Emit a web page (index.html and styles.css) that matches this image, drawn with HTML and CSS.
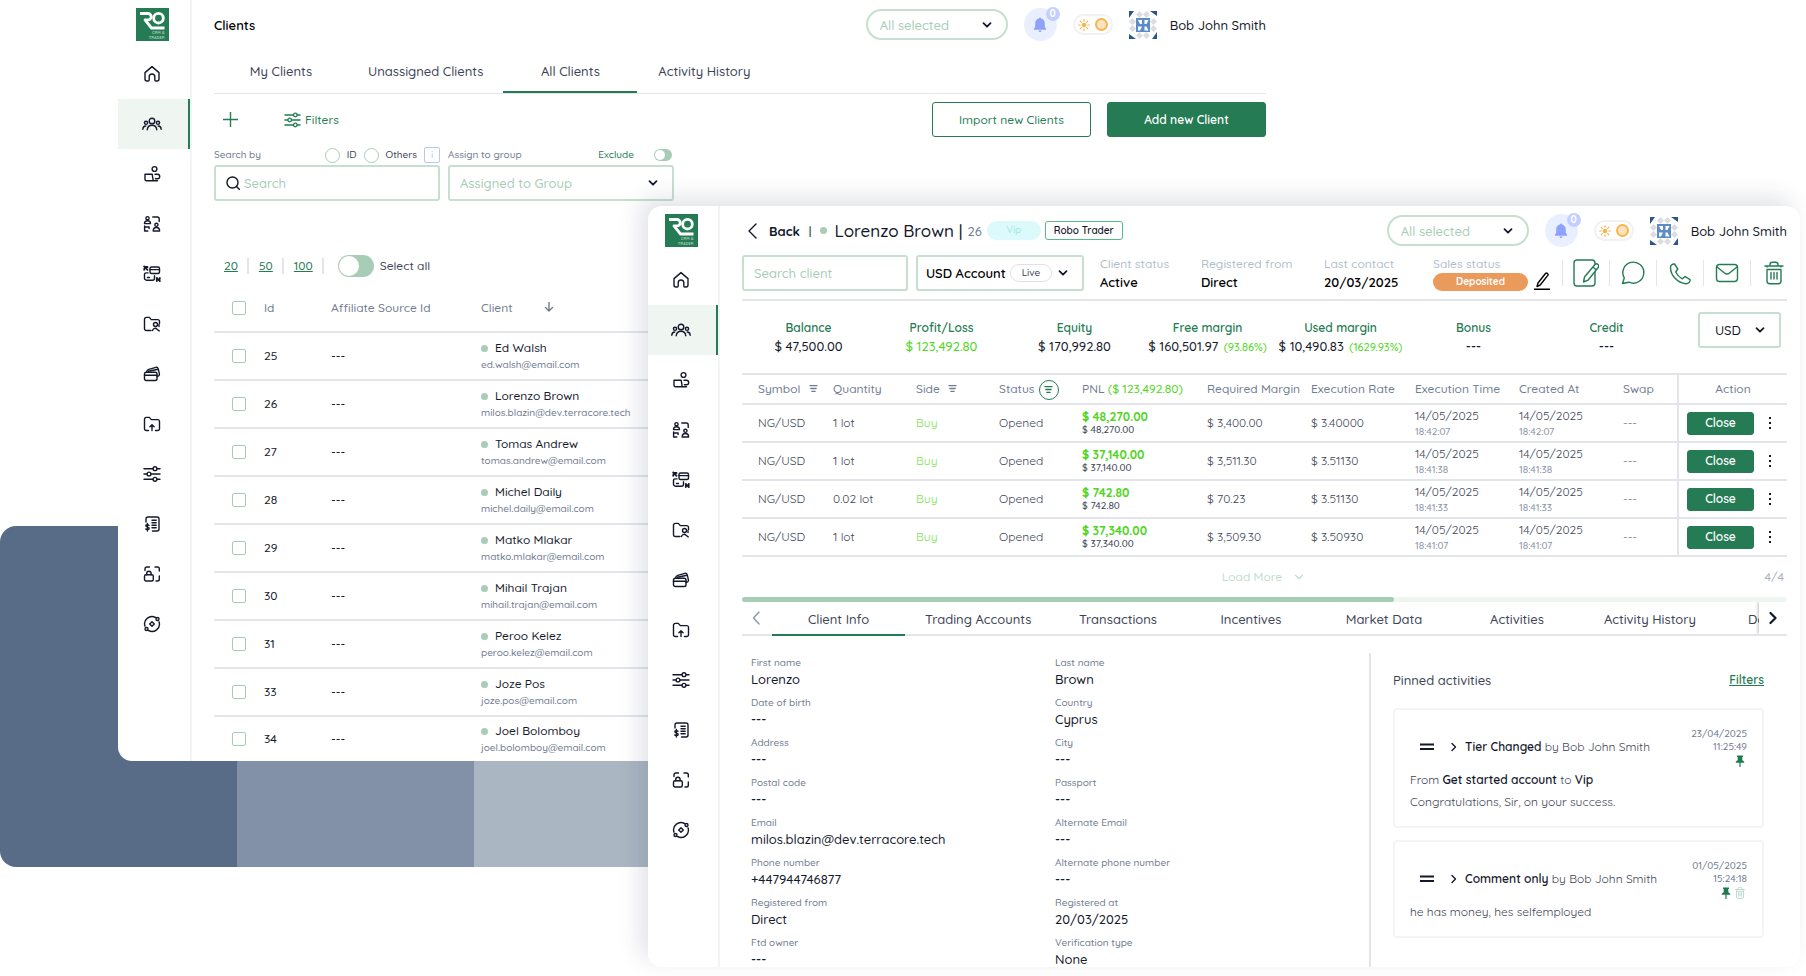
FILE: index.html
```html
<!DOCTYPE html>
<html lang="en">
<head>
    <meta charset="UTF-8">
    <meta name="viewport" content="width=device-width, initial-scale=1.0">
    <title>CRM &amp; Trader</title>
    <link rel="stylesheet" href="styles.css">
</head>
<body>
    <!-- Shared icons -->
    <svg class="sprite" aria-hidden="true">
        <symbol id="logo" viewBox="0 0 33 33">
            <rect width="33" height="33" fill="#257b54" stroke="none"/>
            <g fill="none" stroke="#fff" stroke-width="2.800" stroke-linecap="butt">
                <path d="M4 5.500h8a3.200 3.200 0 0 1 0 6.400H9L15.500 20H28.500"/>
                <circle cx="22.500" cy="10.200" r="4.800"/>
            </g>
            <text x="28.500" y="26" class="logo-text">CRM &amp;</text>
            <text x="28.500" y="30.500" class="logo-text">TRADER</text>
        </symbol>
        <symbol id="home" viewBox="0 0 18 18">
            <path d="M2 7.600 9 1.600l7 6V14a2 2 0 0 1-2 2h-1.200a1 1 0 0 1-1-1v-3.200a2.800 2.800 0 0 0-5.600 0V15a1 1 0 0 1-1 1H4a2 2 0 0 1-2-2z"/>
        </symbol>
        <symbol id="people" viewBox="0 0 20 18">
            <circle cx="10" cy="6" r="2.800"/><circle cx="4" cy="7.800" r="1.600"/><circle cx="16" cy="7.800" r="1.600"/>
            <path d="M5.200 14.800c.3-3 2.200-4.600 4.800-4.600s4.500 1.600 4.800 4.600M.8 14.200c.1-2 1.200-3.200 3-3.200M19.200 14.200c-.1-2-1.200-3.200-3-3.200"/>
        </symbol>
        <symbol id="desk" viewBox="0 0 18 18">
            <circle cx="11.500" cy="4" r="2.400"/>
            <path d="M2 9.200h7.200l1 6.600H3.600a1.600 1.600 0 0 1-1.600-1.600zM12 9.200h2.400a2.300 2.300 0 0 1 0 4.600h-2M8 15.800h6.500"/>
        </symbol>
        <symbol id="team" viewBox="0 0 18 18">
            <circle cx="4.500" cy="3.200" r="1.600"/><path d="M1.500 8.600c0-3.800 6-3.800 6 0zM9.800 2h4.600A1.800 1.800 0 0 1 16.200 3.800V6.500M1.600 11v5h3.200M1.600 12h4.500v1.500"/>
            <circle cx="13.400" cy="9.800" r="1.600"/><path d="M10.200 16c0-4.600 6.400-4.600 6.400 0z"/>
        </symbol>
        <symbol id="transfer" viewBox="0 0 18 18">
            <rect x="7" y="2" width="9.500" height="6.500" rx="1.500"/><path d="M7 4.600h9.500M11.500 10.800v2.400a2 2 0 0 1-2 2h-6a2 2 0 0 1-2-2V9.500a1.600 1.600 0 0 1 1.600-1.600H5M4.500 12.500h2"/>
            <path d="M1.200 1.500 4.500 4.800M1.200 4.800V4M4.500 2h-2M16.800 16l-3-3M13.800 16v-1.500M16.800 13v1" stroke-width="1.800"/>
        </symbol>
        <symbol id="folder-user" viewBox="0 0 18 18">
            <path d="M8 15.500H3.300A1.800 1.800 0 0 1 1.500 13.700V4.200a1.800 1.800 0 0 1 1.800-1.800h3l2 2.200h6.400a1.800 1.800 0 0 1 1.800 1.800v2"/>
            <circle cx="12.500" cy="9.500" r="2"/><path d="M9.500 15.500c1-2.800 3.500-2.600 4.500-1.200l2.200 1.600M16 9.500v2"/>
        </symbol>
        <symbol id="cards" viewBox="0 0 18 18">
            <rect x="1.500" y="7.200" width="12.500" height="8.300" rx="1.800"/>
            <path d="M1.500 10.200h12.500M3.500 7.200c.2-2 .8-2.400 2.200-2.800l7.200-2c1.400-.4 2 .2 2.300 1.300l1.200 5.200c.2 1.200-.6 2.400-2.400 2.700M5.500 6.200 15 4.300"/>
        </symbol>
        <symbol id="folder-up" viewBox="0 0 18 18">
            <path d="M5.500 15.500H3.300A1.800 1.800 0 0 1 1.500 13.700V4.200a1.800 1.800 0 0 1 1.800-1.800h3l2 2.200h6.400a1.800 1.800 0 0 1 1.800 1.800v7.300a1.800 1.800 0 0 1-1.800 1.800h-2.200M9 15.500V10M6.900 11.800 9 9.700l2.100 2.100"/>
        </symbol>
        <symbol id="sliders" viewBox="0 0 18 18">
            <path d="M1 3.700h8.800M14.200 3.700H17M1 9h2.800M8.200 9H17M1 14.300h8.800M14.200 14.300H17"/>
            <circle cx="12" cy="3.700" r="1.900"/><circle cx="6" cy="9" r="1.900"/><circle cx="12" cy="14.300" r="1.900"/>
        </symbol>
        <symbol id="invoice" viewBox="0 0 18 18">
            <path d="M3 7V4a2 2 0 0 1 2-2h9a2 2 0 0 1 2 2v10a2 2 0 0 1-2 2H9.500M9 5.200h4.200M9 7.700h4.200M9 10.200h4.200M9 12.700h4.200"/>
            <path d="M6 10.200c-.8-.9-3.200-.8-3.200.6 0 1.500 3.400 1 3.400 2.600 0 1.500-2.700 1.500-3.600.5M4.400 8.500v7.500"/>
        </symbol>
        <symbol id="lock" viewBox="0 0 18 18">
            <path d="M2 5.500V3.800A1.800 1.800 0 0 1 3.800 2H6.500M12 2h2.500a1.800 1.800 0 0 1 1.800 1.800V6M16.300 11v3.200a1.800 1.800 0 0 1-1.800 1.800H13"/>
            <rect x="1.500" y="9.800" width="8.800" height="6.200" rx="1.500"/><path d="M3.700 9.800V8.500a2.200 2.200 0 0 1 4.400 0v1.300"/>
        </symbol>
        <symbol id="orbit" viewBox="0 0 18 18">
            <path d="M2 11.200A7.300 7.300 0 0 1 12.800 2.700M16 6.800A7.300 7.300 0 0 1 5.200 15.300M9 6.700 11.300 9 9 11.300 6.700 9z"/>
            <circle cx="14.500" cy="4" r="1.500"/><circle cx="3.500" cy="14" r="1.500"/>
        </symbol>
        <symbol id="chevron" viewBox="0 0 10 10"><path d="M1.500 3.200 5 6.700l3.500-3.500"/></symbol>
        <symbol id="bell" viewBox="0 0 16 16">
            <path fill="#8ea2fb" stroke="none" d="M7 1.500a1 1 0 0 1 2 0c2.400.5 3.800 2.300 3.800 4.800v3.500l1.400 2.200v.8H1.800V12l1.400-2.200V6.300C3.200 3.800 4.600 2 7 1.500zM6.500 13.600h3a1.500 1.500 0 0 1-3 0z"/>
        </symbol>
        <symbol id="sun" viewBox="0 0 12 12">
            <circle cx="6" cy="6" r="2.300" fill="#f9b54c" stroke="none"/>
            <path stroke="#f9b54c" stroke-width="1.200" d="M6 .6v1.600M6 9.800v1.600M.6 6h1.600M9.800 6h1.600M2.200 2.200l1.100 1.100M8.700 8.700l1.100 1.100M2.200 9.800l1.100-1.100M8.700 3.300l1.100-1.100"/>
        </symbol>
        <symbol id="avatar" viewBox="0 0 28 28">
            <g stroke="none">
                <path fill="#dcdde0" d="m10.500 0 3.500 3.500L10.500 7 7 3.500zM17.500 0 21 3.500 17.500 7 14 3.500zM10.500 21l3.500 3.500-3.500 3.500L7 24.500zM17.500 21l3.500 3.500-3.500 3.500-3.500-3.500zM3.500 7 7 10.500 3.500 14 0 10.500zM3.500 14 7 17.500 3.500 21 0 17.500zM24.500 7l3.500 3.500-3.500 3.500-3.500-3.500zM24.500 14l3.500 3.500-3.500 3.500-3.500-3.500z"/>
                <path fill="#2a5390" d="M0 0h5L0 7zM28 0v5l-7-5zM28 28h-5l5-7zM0 28v-5l7 5z"/>
                <rect x="7" y="7" width="14" height="14" fill="#5b8cc8"/>
                <path fill="#fff" d="M9 9h4v4h-2zM15.500 9h4l-2 4h-2zM9 15.500h4l-2 4H9zM15.500 15.500h2l2 4h-4z"/>
            </g>
        </symbol>
        <symbol id="bars" viewBox="0 0 10 10"><path d="M1 1.700h8M2 5h6M3.200 8.300h3.600"/></symbol>
        <symbol id="pin" viewBox="0 0 10 12"><path fill="#1d7a50" stroke="none" d="M2 .5h6V2H7.300v3.200c1.300.6 2 1.300 2 2.500H5.600V12H4.400V7.700H.7c0-1.200.7-1.900 2-2.500V2H2z"/></symbol>
        <symbol id="trash" viewBox="0 0 20 24">
            <path d="M1 5h18M3 9v11a2.800 2.800 0 0 0 2.800 2.800h8.400A2.800 2.800 0 0 0 17 20V9M3 5v1M17 5v1M6 5V3.600A2.400 2.400 0 0 1 8.400 1.200h3.200A2.400 2.400 0 0 1 14 3.600V5M7 11.500V18M10 11.500V18M13 11.500V18M3 8.500h14"/>
        </symbol>
    </svg>

    <div class="stripes">
        <span class="stripe-dark"></span>
        <span class="stripe-mid"></span>
        <span class="stripe-light"></span>
    </div>

    <!-- Clients list -->
    <section class="window window-back">
        <nav class="sidebar" aria-label="Main">
            <a href="#" class="logo" aria-label="Dashboard"><svg><use href="#logo"/></svg></a>
            <a href="#" aria-label="Home"><svg><use href="#home"/></svg></a>
            <a href="#" class="active" aria-label="Clients"><svg><use href="#people"/></svg></a>
            <a href="#" aria-label="Desk"><svg><use href="#desk"/></svg></a>
            <a href="#" aria-label="Teams"><svg><use href="#team"/></svg></a>
            <a href="#" aria-label="Transfers"><svg><use href="#transfer"/></svg></a>
            <a href="#" aria-label="Client files"><svg><use href="#folder-user"/></svg></a>
            <a href="#" aria-label="Cards"><svg><use href="#cards"/></svg></a>
            <a href="#" aria-label="Uploads"><svg><use href="#folder-up"/></svg></a>
            <a href="#" aria-label="Settings"><svg><use href="#sliders"/></svg></a>
            <a href="#" aria-label="Invoices"><svg><use href="#invoice"/></svg></a>
            <a href="#" aria-label="Security"><svg><use href="#lock"/></svg></a>
            <a href="#" aria-label="Automation"><svg><use href="#orbit"/></svg></a>
        </nav>
        <main class="content">
            <header class="topbar">
                <h1>Clients</h1>
                <div class="user-tools">
                    <div class="select pill">
                        <select aria-label="Selection"><option>All selected</option></select>
                        <svg><use href="#chevron"/></svg>
                    </div>
                    <button class="bell" aria-label="Notifications"><svg><use href="#bell"/></svg><span class="badge">0</span></button>
                    <button class="theme" aria-label="Theme"><svg><use href="#sun"/></svg><span class="theme-knob"></span></button>
                    <svg class="avatar"><use href="#avatar"/></svg>
                    <span class="user-name">Bob John Smith</span>
                </div>
            </header>

            <nav class="tabs" aria-label="Client lists">
                <a href="#">My Clients</a>
                <a href="#">Unassigned Clients</a>
                <a href="#" class="active">All Clients</a>
                <a href="#">Activity History</a>
            </nav>

            <div class="toolbar">
                <button class="plain" aria-label="Add"><svg class="plus" viewBox="0 0 15 15"><path d="M7.500 0v15M0 7.500h15"/></svg></button>
                <button class="plain filters"><svg><use href="#sliders"/></svg>Filters</button>
                <button class="btn btn-outline">Import new Clients</button>
                <button class="btn">Add new Client</button>
            </div>

            <div class="search-row">
                <div class="field">
                    <div class="field-head">
                        <label for="search">Search by</label>
                        <span class="options">
                            <input type="radio" name="by" id="by-id"><label for="by-id">ID</label>
                            <input type="radio" name="by" id="by-others"><label for="by-others">Others</label>
                            <span class="info">i</span>
                        </span>
                    </div>
                    <div class="box">
                        <svg class="lens" viewBox="0 0 14 14"><circle cx="6.500" cy="6.500" r="5.500"/><path d="m10.500 10.500 3 3"/></svg>
                        <input type="text" id="search" placeholder="Search">
                    </div>
                </div>
                <div class="field">
                    <div class="field-head">
                        <label for="group">Assign to group</label>
                        <span class="exclude">
                            <label for="exclude">Exclude</label>
                            <input type="checkbox" class="switch switch-small" id="exclude">
                        </span>
                    </div>
                    <div class="box select">
                        <select id="group"><option>Assigned to Group</option></select>
                        <svg><use href="#chevron"/></svg>
                    </div>
                </div>
            </div>

            <div class="pager">
                <a href="#">20</a>
                <a href="#">50</a>
                <a href="#">100</a>
                <input type="checkbox" class="switch" id="select-all">
                <label for="select-all">Select all</label>
            </div>

            <table class="clients">
                <thead>
                    <tr>
                        <th class="col-check"><input type="checkbox" aria-label="All rows"></th>
                        <th class="col-id">Id</th>
                        <th class="col-source">Affiliate Source Id</th>
                        <th>Client <svg class="sort" viewBox="0 0 10 10"><path d="M5 .5v8.500M1.500 5.500 5 9l3.500-3.500"/></svg></th>
                    </tr>
                </thead>
                <tbody>
                    <tr><td><input type="checkbox" aria-label="25"></td><td>25</td><td>---</td><td><span class="client">Ed Walsh</span><span class="email">ed.walsh@email.com</span></td></tr>
                    <tr><td><input type="checkbox" aria-label="26"></td><td>26</td><td>---</td><td><span class="client">Lorenzo Brown</span><span class="email">milos.blazin@dev.terracore.tech</span></td></tr>
                    <tr><td><input type="checkbox" aria-label="27"></td><td>27</td><td>---</td><td><span class="client">Tomas Andrew</span><span class="email">tomas.andrew@email.com</span></td></tr>
                    <tr><td><input type="checkbox" aria-label="28"></td><td>28</td><td>---</td><td><span class="client">Michel Daily</span><span class="email">michel.daily@email.com</span></td></tr>
                    <tr><td><input type="checkbox" aria-label="29"></td><td>29</td><td>---</td><td><span class="client">Matko Mlakar</span><span class="email">matko.mlakar@email.com</span></td></tr>
                    <tr><td><input type="checkbox" aria-label="30"></td><td>30</td><td>---</td><td><span class="client">Mihail Trajan</span><span class="email">mihail.trajan@email.com</span></td></tr>
                    <tr><td><input type="checkbox" aria-label="31"></td><td>31</td><td>---</td><td><span class="client">Peroo Kelez</span><span class="email">peroo.kelez@email.com</span></td></tr>
                    <tr><td><input type="checkbox" aria-label="33"></td><td>33</td><td>---</td><td><span class="client">Joze Pos</span><span class="email">joze.pos@email.com</span></td></tr>
                    <tr><td><input type="checkbox" aria-label="34"></td><td>34</td><td>---</td><td><span class="client">Joel Bolomboy</span><span class="email">joel.bolomboy@email.com</span></td></tr>
                </tbody>
            </table>
        </main>
    </section>

    <!-- Client details -->
    <section class="window window-front">
        <nav class="sidebar" aria-label="Main">
            <a href="#" class="logo" aria-label="Dashboard"><svg><use href="#logo"/></svg></a>
            <a href="#" aria-label="Home"><svg><use href="#home"/></svg></a>
            <a href="#" class="active" aria-label="Clients"><svg><use href="#people"/></svg></a>
            <a href="#" aria-label="Desk"><svg><use href="#desk"/></svg></a>
            <a href="#" aria-label="Teams"><svg><use href="#team"/></svg></a>
            <a href="#" aria-label="Transfers"><svg><use href="#transfer"/></svg></a>
            <a href="#" aria-label="Client files"><svg><use href="#folder-user"/></svg></a>
            <a href="#" aria-label="Cards"><svg><use href="#cards"/></svg></a>
            <a href="#" aria-label="Uploads"><svg><use href="#folder-up"/></svg></a>
            <a href="#" aria-label="Settings"><svg><use href="#sliders"/></svg></a>
            <a href="#" aria-label="Invoices"><svg><use href="#invoice"/></svg></a>
            <a href="#" aria-label="Security"><svg><use href="#lock"/></svg></a>
            <a href="#" aria-label="Automation"><svg><use href="#orbit"/></svg></a>
        </nav>
        <main class="content">
            <header class="topbar">
                <div class="title">
                    <a href="#" class="back"><svg viewBox="0 0 10 16"><path d="M9 1 2 8l7 7"/></svg>Back</a>
                    <span class="bar">|</span>
                    <span class="dot"></span>
                    <h2>Lorenzo Brown |</h2>
                    <span class="client-id">26</span>
                    <span class="tag tag-vip">Vip</span>
                    <span class="tag tag-robo">Robo Trader</span>
                </div>
                <div class="user-tools">
                    <div class="select pill">
                        <select aria-label="Selection"><option>All selected</option></select>
                        <svg><use href="#chevron"/></svg>
                    </div>
                    <button class="bell" aria-label="Notifications"><svg><use href="#bell"/></svg><span class="badge">0</span></button>
                    <button class="theme" aria-label="Theme"><svg><use href="#sun"/></svg><span class="theme-knob"></span></button>
                    <svg class="avatar"><use href="#avatar"/></svg>
                    <span class="user-name">Bob John Smith</span>
                </div>
            </header>

            <div class="summary">
                <div class="box search-client"><input type="text" aria-label="Search client" placeholder="Search client"></div>
                <div class="box select account">
                    <select aria-label="Account"><option>USD Account</option></select>
                    <span class="live">Live</span>
                    <svg><use href="#chevron"/></svg>
                </div>
                <dl class="status">
                    <div class="status-client"><dt>Client status</dt><dd>Active</dd></div>
                    <div class="status-from"><dt>Registered from</dt><dd>Direct</dd></div>
                    <div class="status-contact"><dt>Last contact</dt><dd>20/03/2025</dd></div>
                    <div><dt>Sales status</dt><dd class="deposited">Deposited</dd></div>
                </dl>
                <button class="plain edit" aria-label="Edit status"><svg viewBox="0 0 16 18"><path d="M3 14.500 4 11l7.500-9.500a1.500 1.500 0 0 1 2.300 1.900L6.200 13zM0 17.300h16"/></svg></button>
                <div class="actions">
                    <button class="plain" aria-label="Note"><svg viewBox="0 0 26 28"><rect x="1" y="1" width="21" height="26" rx="3"/><path fill="#fff" d="m10.500 23 1-5L22 5.500a2.200 2.200 0 0 1 3.200 3L15 21.200zM20 8l3.200 3"/></svg></button>
                    <button class="plain" aria-label="Chat"><svg viewBox="0 0 26 28"><path d="M2.500 24.500 4.300 19A10.500 10.500 0 1 1 9 23.200z"/></svg></button>
                    <button class="plain" aria-label="Call"><svg viewBox="0 0 26 28"><path d="M7.500 5 10.800 10 8.700 13c1.500 3 3.600 5.300 6.600 6.800l2.800-2.300 5 3.200c.4 2-1.800 4.300-4.300 4C10.500 24 3.500 16.500 3.500 8.500c0-2 2-3.900 4-3.500z"/></svg></button>
                    <button class="plain" aria-label="Mail"><svg viewBox="0 0 26 28"><rect x="2.500" y="5.500" width="21" height="17" rx="3"/><path d="m3 8 7.500 6a4 4 0 0 0 5 0L23 8"/></svg></button>
                    <button class="plain" aria-label="Delete"><svg viewBox="-3 -2 26 28"><use href="#trash" width="20" height="24"/></svg></button>
                </div>
            </div>

            <div class="balances">
                <dl>
                    <div><dt>Balance</dt><dd>$ 47,500.00</dd></div>
                    <div><dt>Profit/Loss</dt><dd class="gain">$ 123,492.80</dd></div>
                    <div><dt>Equity</dt><dd>$ 170,992.80</dd></div>
                    <div><dt>Free margin</dt><dd>$ 160,501.97 <small>(93.86%)</small></dd></div>
                    <div><dt>Used margin</dt><dd>$ 10,490.83 <small>(1629.93%)</small></dd></div>
                    <div><dt>Bonus</dt><dd>---</dd></div>
                    <div><dt>Credit</dt><dd>---</dd></div>
                </dl>
                <div class="box select currency">
                    <select aria-label="Currency"><option>USD</option></select>
                    <svg><use href="#chevron"/></svg>
                </div>
            </div>

            <table class="trades">
                <thead>
                    <tr>
                        <th class="w-symbol">Symbol <svg class="bars"><use href="#bars"/></svg></th>
                        <th class="w-small">Quantity</th>
                        <th class="w-small">Side <svg class="bars"><use href="#bars"/></svg></th>
                        <th class="w-small">Status<span class="ring"><svg class="bars"><use href="#bars"/></svg></span></th>
                        <th class="w-pnl">PNL <span class="gain">($ 123,492.80)</span></th>
                        <th class="w-mid">Required Margin</th>
                        <th class="w-mid">Execution Rate</th>
                        <th class="w-mid">Execution Time</th>
                        <th class="w-mid">Created At</th>
                        <th class="w-swap">Swap</th>
                        <th class="w-action">Action</th>
                    </tr>
                </thead>
                <tbody>
                    <tr>
                        <td>NG/USD</td><td>1 lot</td><td class="buy">Buy</td><td>Opened</td>
                        <td class="pnl"><b>$ 48,270.00</b><small>$ 48,270.00</small></td>
                        <td>$ 3,400.00</td><td>$ 3.40000</td>
                        <td class="time">14/05/2025<small>18:42:07</small></td>
                        <td class="time">14/05/2025<small>18:42:07</small></td>
                        <td>---</td>
                        <td class="action"><button class="btn btn-close">Close</button><button class="plain kebab" aria-label="More"><svg viewBox="0 0 4 14"><path d="M1 1h2v2H1zM1 6h2v2H1zM1 11h2v2H1z"/></svg></button></td>
                    </tr>
                    <tr>
                        <td>NG/USD</td><td>1 lot</td><td class="buy">Buy</td><td>Opened</td>
                        <td class="pnl"><b>$ 37,140.00</b><small>$ 37,140.00</small></td>
                        <td>$ 3,511.30</td><td>$ 3.51130</td>
                        <td class="time">14/05/2025<small>18:41:38</small></td>
                        <td class="time">14/05/2025<small>18:41:38</small></td>
                        <td>---</td>
                        <td class="action"><button class="btn btn-close">Close</button><button class="plain kebab" aria-label="More"><svg viewBox="0 0 4 14"><path d="M1 1h2v2H1zM1 6h2v2H1zM1 11h2v2H1z"/></svg></button></td>
                    </tr>
                    <tr>
                        <td>NG/USD</td><td>0.02 lot</td><td class="buy">Buy</td><td>Opened</td>
                        <td class="pnl"><b>$ 742.80</b><small>$ 742.80</small></td>
                        <td>$ 70.23</td><td>$ 3.51130</td>
                        <td class="time">14/05/2025<small>18:41:33</small></td>
                        <td class="time">14/05/2025<small>18:41:33</small></td>
                        <td>---</td>
                        <td class="action"><button class="btn btn-close">Close</button><button class="plain kebab" aria-label="More"><svg viewBox="0 0 4 14"><path d="M1 1h2v2H1zM1 6h2v2H1zM1 11h2v2H1z"/></svg></button></td>
                    </tr>
                    <tr>
                        <td>NG/USD</td><td>1 lot</td><td class="buy">Buy</td><td>Opened</td>
                        <td class="pnl"><b>$ 37,340.00</b><small>$ 37,340.00</small></td>
                        <td>$ 3,509.30</td><td>$ 3.50930</td>
                        <td class="time">14/05/2025<small>18:41:07</small></td>
                        <td class="time">14/05/2025<small>18:41:07</small></td>
                        <td>---</td>
                        <td class="action"><button class="btn btn-close">Close</button><button class="plain kebab" aria-label="More"><svg viewBox="0 0 4 14"><path d="M1 1h2v2H1zM1 6h2v2H1zM1 11h2v2H1z"/></svg></button></td>
                    </tr>
                </tbody>
            </table>
            <div class="load-more">
                <button class="plain">Load More <svg><use href="#chevron"/></svg></button>
                <span>4/4</span>
            </div>
            <div class="scrollbar"><div class="thumb"></div></div>

            <div class="tab-strip">
                <button class="plain prev" aria-label="Previous tabs"><svg viewBox="0 0 8 14"><path d="M7 1 1.500 7 7 13"/></svg></button>
                <nav class="tabs" aria-label="Client sections">
                    <a href="#" class="active">Client Info</a>
                    <a href="#">Trading Accounts</a>
                    <a href="#">Transactions</a>
                    <a href="#">Incentives</a>
                    <a href="#">Market Data</a>
                    <a href="#">Activities</a>
                    <a href="#">Activity History</a>
                    <a href="#">Documents</a>
                </nav>
                <button class="plain next" aria-label="Next tabs"><svg viewBox="0 0 8 14"><path d="m1.500 2 5 5-5 5"/></svg></button>
            </div>

            <div class="details">
                <dl class="client-info">
                    <div><dt>First name</dt><dd>Lorenzo</dd></div>
                    <div><dt>Last name</dt><dd>Brown</dd></div>
                    <div><dt>Date of birth</dt><dd>---</dd></div>
                    <div><dt>Country</dt><dd>Cyprus</dd></div>
                    <div><dt>Address</dt><dd>---</dd></div>
                    <div><dt>City</dt><dd>---</dd></div>
                    <div><dt>Postal code</dt><dd>---</dd></div>
                    <div><dt>Passport</dt><dd>---</dd></div>
                    <div><dt>Email</dt><dd>milos.blazin@dev.terracore.tech</dd></div>
                    <div><dt>Alternate Email</dt><dd>---</dd></div>
                    <div><dt>Phone number</dt><dd>+447944746877</dd></div>
                    <div><dt>Alternate phone number</dt><dd>---</dd></div>
                    <div><dt>Registered from</dt><dd>Direct</dd></div>
                    <div><dt>Registered at</dt><dd>20/03/2025</dd></div>
                    <div><dt>Ftd owner</dt><dd>---</dd></div>
                    <div><dt>Verification type</dt><dd>None</dd></div>
                </dl>
                <aside class="pinned">
                    <div class="pinned-head"><h3>Pinned activities</h3><a href="#">Filters</a></div>
                    <article class="card">
                        <div class="card-head">
                            <svg class="grip" viewBox="0 0 14 8"><path d="M0 1.500h14M0 6h14"/></svg>
                            <svg class="open" viewBox="0 0 6 10"><path d="m1 1.500 3.500 3.500L1 8.500"/></svg>
                            <p><b>Tier Changed</b> by Bob John Smith</p>
                            <div class="stamp">23/04/2025<br>11:25:49<span><svg><use href="#pin"/></svg></span></div>
                        </div>
                        <p>From <b>Get started account</b> to <b>Vip</b></p>
                        <p>Congratulations, Sir, on your success.</p>
                    </article>
                    <article class="card">
                        <div class="card-head">
                            <svg class="grip" viewBox="0 0 14 8"><path d="M0 1.500h14M0 6h14"/></svg>
                            <svg class="open" viewBox="0 0 6 10"><path d="m1 1.500 3.500 3.500L1 8.500"/></svg>
                            <p><b>Comment only</b> by Bob John Smith</p>
                            <div class="stamp">01/05/2025<br>15:24:18<span><svg><use href="#pin"/></svg><svg class="bin"><use href="#trash"/></svg></span></div>
                        </div>
                        <p>he has money, hes selfemployed</p>
                    </article>
                </aside>
            </div>
        </main>
    </section>
</body>
</html>
```
FILE: styles.css
```css
:root {
    --green: #257b54;
    --green-soft: #a8cdb7;
    --green-line: #c5e0d0;
    --green-pale: #eff6f2;
    --lime: #4fd61c;
    --ink: #14182b;
    --text: #3c4455;
    --muted: #6f7b91;
    --line: #e4e5eb;
}

* {
    margin: 0;
    padding: 0;
    box-sizing: border-box;
}

body {
    position: relative;
    min-height: 100vh;
    overflow: hidden;
    background: #fff;
    color: var(--text);
    font-family: Quicksand, Lato, sans-serif;
    font-size: 12px;
    font-weight: 500;
    line-height: 16px;
}

input, select, button {
    font: inherit;
    color: inherit;
    background: none;
    border: none;
    outline: none;
    appearance: none;
}

button {
    cursor: pointer;
}

a {
    color: inherit;
    text-decoration: none;
}

svg {
    flex: none;
    fill: none;
    stroke: currentColor;
    stroke-width: 1.4;
    stroke-linecap: round;
    stroke-linejoin: round;
}

h1, h2, h3, th {
    font-weight: 500;
}

b {
    color: var(--ink);
    font-weight: 600;
}

.sprite {
    position: absolute;
    width: 0;
    height: 0;
}

/* Background stripes */
.stripes {
    position: absolute;
    top: 526px;
    left: 0;
    display: flex;
    height: 341px;
    border-radius: 16px;
    overflow: hidden;
}

.stripes span {
    width: 237px;
}

.stripe-dark { background: #596c87; }
.stripe-mid { background: #8291a8; }
.stripe-light { background: #aab6c2; }

/* Windows */
.window {
    position: absolute;
    display: flex;
    background: #fff;
    border-radius: 14px;
    overflow: hidden;
}

.window-back {
    top: 0;
    left: 118px;
    right: 518px;
}

.window-front {
    top: 206px;
    left: 648px;
    right: 6px;
    box-shadow: -8px -8px 22px rgba(50, 60, 90, 0.14);
}

.content {
    flex: 1;
    min-width: 0;
    padding: 0 13px 0 22px;
}

.window-back .content {
    padding-right: 22px;
}

/* Sidebar */
.sidebar {
    flex: none;
    width: 74px;
    border-right: 2px solid #f3f4f6;
    color: var(--ink);
}

.window-front .sidebar {
    width: 72px;
}

.sidebar a {
    display: flex;
    align-items: center;
    justify-content: center;
    height: 50px;
    padding-right: 4px;
}

.sidebar a.active {
    padding-right: 2px;
    background: var(--green-pale);
    border-right: 2px solid var(--green);
}

.sidebar a.logo {
    height: 49px;
}

.sidebar svg {
    width: 18px;
    height: 18px;
}

.sidebar .active svg {
    width: 20px;
}

.sidebar .logo svg {
    width: 33px;
    height: 33px;
}

.logo-text {
    fill: #a8cbb8;
    stroke: none;
    font-size: 4px;
    font-weight: 700;
    text-anchor: end;
}

/* Top bar */
.topbar {
    display: flex;
    align-items: center;
    justify-content: space-between;
    height: 49px;
    white-space: nowrap;
}

.topbar h1 {
    font-size: 13px;
    font-weight: 600;
    color: #000;
}

.user-tools {
    display: flex;
    align-items: center;
    gap: 16px;
    color: var(--ink);
}

.user-name {
    margin-left: -3px;
    font-size: 13px;
}

.select {
    position: relative;
    display: flex;
    align-items: center;
}

.select select {
    flex: 1;
    min-width: 0;
}

.select svg {
    width: 10px;
    height: 10px;
    color: var(--ink);
    stroke-width: 1.8;
}

.pill {
    width: 142px;
    height: 31px;
    padding: 0 14px 0 12px;
    border: 2px solid var(--green-line);
    border-radius: 16px;
}

.pill select {
    font-size: 13px;
    color: var(--green-soft);
}

.bell {
    position: relative;
    display: flex;
    align-items: center;
    justify-content: center;
    width: 33px;
    height: 33px;
    border-radius: 50%;
    background: #e9efff;
}

.bell svg {
    width: 16px;
    height: 16px;
}

.badge {
    position: absolute;
    top: -1px;
    right: -3px;
    width: 14px;
    height: 14px;
    border-radius: 50%;
    background: #c3d0ff;
    color: #fff;
    font-size: 10px;
    font-weight: 700;
    line-height: 14px;
}

.theme {
    display: flex;
    align-items: center;
    justify-content: space-between;
    width: 40px;
    height: 21px;
    padding: 0 3px;
    border: 2px solid #f1f1f5;
    border-radius: 11px;
}

.theme svg {
    width: 12px;
    height: 12px;
}

.theme-knob {
    width: 13px;
    height: 13px;
    border: 2px solid #f9b54c;
    border-radius: 50%;
    background: #fbe3bf;
}

.avatar {
    width: 28px;
    height: 28px;
}

/* Tabs */
.tabs {
    display: flex;
    height: 45px;
    border-bottom: 1px solid var(--line);
    font-size: 13px;
    white-space: nowrap;
}

.tabs a {
    flex: none;
    display: flex;
    align-items: center;
    justify-content: center;
    min-width: 134px;
    padding: 2px 20px 0;
    border-bottom: 2px solid transparent;
}

.tabs a.active {
    border-color: var(--green);
}

/* Buttons */
.btn {
    width: 159px;
    height: 35px;
    border: 1px solid var(--green);
    border-radius: 3px;
    background: var(--green);
    color: #fff;
    font-weight: 600;
}

.btn-outline {
    margin-left: auto;
    background: #fff;
    color: var(--green);
    font-weight: 500;
}

.btn-close {
    width: 67px;
    height: 23px;
}

.plain {
    display: flex;
    align-items: center;
    justify-content: center;
}

.toolbar {
    display: flex;
    align-items: center;
    gap: 16px;
    padding: 8px 0;
    color: var(--green);
}

.plus {
    width: 15px;
    height: 15px;
    margin: 0 30px 0 9px;
}

.filters {
    gap: 4px;
}

.filters svg {
    width: 17px;
    height: 18px;
}

/* Search fields */
.search-row {
    display: flex;
    gap: 8px;
}

.field {
    width: 226px;
}

.field-head {
    display: flex;
    align-items: center;
    justify-content: space-between;
    height: 20px;
    font-size: 10px;
    color: var(--muted);
}

.options,
.exclude {
    display: flex;
    align-items: center;
    gap: 7px;
    color: var(--text);
}

.exclude {
    gap: 20px;
    padding-right: 2px;
    color: var(--green);
}

.options input {
    width: 15px;
    height: 15px;
    border: 1px solid var(--green-soft);
    border-radius: 50%;
}

.info {
    width: 16px;
    height: 16px;
    border: 1px solid #b9c9e6;
    border-radius: 2px;
    color: #b9c9e6;
    line-height: 14px;
    text-align: center;
}

.box {
    display: flex;
    align-items: center;
    height: 36px;
    padding: 0 14px 0 10px;
    border: 2px solid var(--green-line);
    border-radius: 3px;
    font-size: 13px;
}

.box input {
    flex: 1;
    min-width: 0;
}

::placeholder,
#group {
    color: var(--green-soft);
    opacity: 1;
}

.lens {
    width: 14px;
    height: 14px;
    margin-right: 4px;
    color: var(--ink);
}

/* Switches and tick boxes */
.switch {
    display: flex;
    align-items: center;
    width: 36px;
    height: 22px;
    padding: 1px;
    border-radius: 11px;
    background: var(--green-soft);
}

.switch::before {
    content: "";
    width: 20px;
    height: 20px;
    border-radius: 50%;
    background: #fff;
}

.switch-small {
    width: 18px;
    height: 12px;
}

.switch-small::before {
    width: 10px;
    height: 10px;
}

.pager {
    display: flex;
    align-items: center;
    height: 22px;
    margin: 54px 0 8px;
}

.pager a {
    padding: 0 9px 0 10px;
    border-right: 2px solid var(--line);
    color: var(--green);
    text-decoration: underline;
}

.pager .switch {
    margin: 0 6px 0 14px;
}

/* Clients table */
table {
    width: 100%;
    border-collapse: collapse;
    table-layout: fixed;
    text-align: left;
    white-space: nowrap;
}

.clients th,
.clients td {
    height: 48px;
    border-bottom: 2px solid var(--line);
}

.clients th {
    height: 47px;
    color: var(--muted);
}

.clients tr:last-child td {
    height: 45px;
    border-bottom: none;
}

.clients td {
    color: var(--ink);
}

.col-check { width: 50px; }
.col-id { width: 67px; }
.col-source { width: 150px; }

.clients input {
    display: block;
    width: 14px;
    height: 14px;
    margin-left: 18px;
    border: 1px solid var(--green-soft);
    border-radius: 2px;
}

.sort {
    width: 10px;
    height: 10px;
    margin-left: 28px;
}

.client,
.email {
    display: block;
    line-height: 17px;
}

.client::before,
.dot {
    content: "";
    display: inline-block;
    width: 7px;
    height: 7px;
    border-radius: 50%;
    background: var(--green-soft);
}

.client::before {
    margin-right: 7px;
}

.email {
    font-size: 10px;
    color: var(--muted);
}

/* Client title */
.title {
    display: flex;
    align-items: center;
    padding-left: 5px;
    color: var(--ink);
}

.back {
    display: flex;
    align-items: center;
    gap: 12px;
    font-size: 13px;
    font-weight: 700;
}

.back svg {
    width: 10px;
    height: 16px;
}

.bar {
    margin: 0 9px;
}

.title h2 {
    margin: 0 5px 0 7px;
    font-size: 17px;
}

.client-id {
    font-size: 13px;
    color: var(--muted);
}

.tag {
    height: 19px;
    border-radius: 3px;
    font-size: 10px;
    line-height: 17px;
    text-align: center;
}

.tag-vip {
    width: 54px;
    margin: 0 4px 0 5px;
    border-radius: 10px;
    background: #dcfafc;
    color: #9fe8e4;
}

.tag-robo {
    width: 78px;
    border: 1px solid #58b98a;
    font-weight: 600;
}

/* Client summary */
.summary {
    display: flex;
    align-items: center;
    height: 46px;
    padding-bottom: 9px;
    border-bottom: 2px solid var(--line);
    color: #000;
    white-space: nowrap;
}

.search-client {
    width: 166px;
    margin-right: 8px;
}

.account {
    width: 168px;
    padding-left: 8px;
}

.account select {
    flex: none;
    font-weight: 600;
}

.live {
    width: 43px;
    margin: 0 6px 0 4px;
    border: 1px solid #dfe1ea;
    border-radius: 9px;
    color: var(--text);
    font-size: 10px;
    text-align: center;
}

.status {
    display: flex;
    margin-left: 16px;
    font-size: 13px;
    font-weight: 600;
    line-height: 18px;
}

.status dt {
    font-size: 12px;
    font-weight: 500;
    color: #b3bccb;
}

.status-client { width: 101px; }
.status-from { width: 123px; }
.status-contact { width: 109px; }

.status .deposited {
    width: 95px;
    border-radius: 9px;
    background: #ea9a5b;
    color: #fff;
    font-size: 10px;
    font-weight: 700;
    text-align: center;
}

.edit {
    align-self: flex-end;
    margin-left: 6px;
}

.edit svg {
    width: 16px;
    height: 18px;
}

.actions {
    display: flex;
    margin-left: auto;
    color: var(--green);
}

.actions button {
    height: 26px;
    padding-left: 10px;
    border-left: 1px solid var(--line);
}

.actions button + button {
    margin-left: 10px;
}

.actions svg {
    width: 26px;
    height: 28px;
}

/* Balances */
.balances {
    display: flex;
    align-items: flex-start;
    justify-content: space-between;
    height: 74px;
    padding-top: 11px;
    padding-right: 6px;
    border-bottom: 2px solid var(--line);
}

.balances dl {
    flex: 1;
    display: grid;
    grid-template-columns: repeat(7, minmax(0, 1fr));
    padding: 6px 25px 0 0;
    color: var(--ink);
    font-size: 13px;
    line-height: 19px;
    white-space: nowrap;
}

.balances dl div {
    display: flex;
    flex-direction: column;
    align-items: center;
}

.balances dt {
    font-size: 12px;
    font-weight: 600;
    color: var(--green);
}

.balances small {
    margin-left: 2px;
    font-size: 11px;
    color: var(--lime);
}

.balances .gain,
.gain,
.buy {
    color: var(--lime);
}

.currency {
    width: 83px;
    padding-left: 15px;
    color: var(--ink);
}

/* Trades table */
.trades th,
.trades td {
    height: 38px;
    padding-left: 16px;
    border-bottom: 2px solid var(--line);
}

.trades td {
    font-weight: 400;
}

.trades th {
    height: 29px;
    color: var(--muted);
}

.w-symbol { width: 75px; }
.w-small { width: 83px; }
.w-pnl { width: 125px; }
.w-mid { width: 104px; }
.w-swap { width: 71px; }
.w-action { width: 109px; }

.trades .buy {
    color: #7fe055;
}

.trades small {
    display: block;
    font-size: 10px;
    font-weight: 500;
    line-height: 12px;
}

.pnl b {
    display: block;
    color: var(--lime);
    font-weight: 700;
    line-height: 14px;
}

.trades .time small {
    color: #8b94a6;
    line-height: 15px;
}

.bars {
    width: 9px;
    height: 9px;
    margin-left: 5px;
}

.ring {
    display: inline-flex;
    align-items: center;
    justify-content: center;
    width: 20px;
    height: 20px;
    margin: -4px 0 -4px 4px;
    border: 1px solid var(--green);
    border-radius: 50%;
    color: var(--green);
    vertical-align: middle;
}

.ring .bars {
    margin: 0;
}

.trades .w-action {
    padding-left: 0;
    border-left: 2px solid var(--line);
    text-align: center;
}

.trades .action {
    padding-left: 8px;
    border-left: 2px solid var(--line);
}

.action .btn,
.kebab {
    display: inline-block;
    vertical-align: middle;
}

.kebab {
    margin-left: 14px;
    color: var(--ink);
}

.kebab svg {
    display: block;
    width: 4px;
    height: 14px;
    fill: currentColor;
    stroke: none;
}

.load-more {
    display: grid;
    grid-template-columns: 1fr auto 1fr;
    align-items: center;
    height: 40px;
    padding-right: 3px;
    color: #a9b2c0;
}

.load-more button {
    grid-column: 2;
    gap: 12px;
    color: #c3ddcf;
}

.load-more svg {
    width: 10px;
    height: 10px;
}

.load-more span {
    justify-self: end;
}

.scrollbar {
    height: 5px;
    border-radius: 3px;
    background: var(--green-pale);
}

.thumb {
    width: 62.4%;
    height: 100%;
    border-radius: 3px;
    background: var(--green-soft);
}

/* Client sections */
.tab-strip {
    display: flex;
    height: 34px;
    border-bottom: 2px solid var(--line);
}

.tab-strip .tabs {
    flex: 1;
    height: 34px;
    border: none;
    overflow: hidden;
}

.tab-strip .tabs a {
    min-width: 133px;
}

.prev {
    width: 30px;
    padding-right: 2px;
    color: #8d94a3;
}

.next {
    width: 28px;
    color: var(--ink);
    box-shadow: -1px 0 3px rgba(0, 0, 0, 0.25);
    clip-path: inset(0 0 0 -4px);
}

.tab-strip svg {
    width: 8px;
    height: 14px;
}

.next svg {
    stroke-width: 2.2;
}

.details {
    display: flex;
}

.client-info {
    flex: 1;
    display: grid;
    grid-template-columns: 1fr 1fr;
    row-gap: 8px;
    padding: 19px 10px 0 9px;
}

.client-info dt {
    font-size: 10px;
    color: var(--muted);
}

.client-info dd {
    font-size: 13px;
    color: var(--ink);
}

.pinned {
    width: 418px;
    margin-top: 17px;
    padding: 17px 23px 0 22px;
    border-left: 2px solid var(--line);
}

.pinned-head {
    display: flex;
    justify-content: space-between;
    margin-bottom: 18px;
    line-height: 20px;
}

.pinned-head h3 {
    font-size: 13px;
}

.pinned-head a {
    color: var(--green);
    font-weight: 600;
    text-decoration: underline;
}

.card {
    margin-bottom: 12px;
    padding: 15px 15px 13px;
    border: 2px solid #f4f4f6;
    border-radius: 4px;
    font-weight: 400;
    line-height: 22px;
}

.card-head {
    display: flex;
    align-items: center;
    height: 44px;
    padding-left: 10px;
}

.grip {
    width: 14px;
    height: 8px;
    margin-right: 17px;
    color: var(--ink);
    stroke-width: 2;
}

.open {
    width: 6px;
    height: 10px;
    margin-right: 8px;
    color: var(--ink);
}

.stamp {
    margin-left: auto;
    color: var(--muted);
    font-size: 10px;
    font-weight: 500;
    line-height: 13px;
    text-align: right;
}

.stamp span {
    display: flex;
    justify-content: flex-end;
    gap: 4px;
    padding: 2px 2px 0 0;
}

.stamp svg {
    width: 10px;
    height: 12px;
}

.stamp .bin {
    color: var(--green-soft);
}
```
